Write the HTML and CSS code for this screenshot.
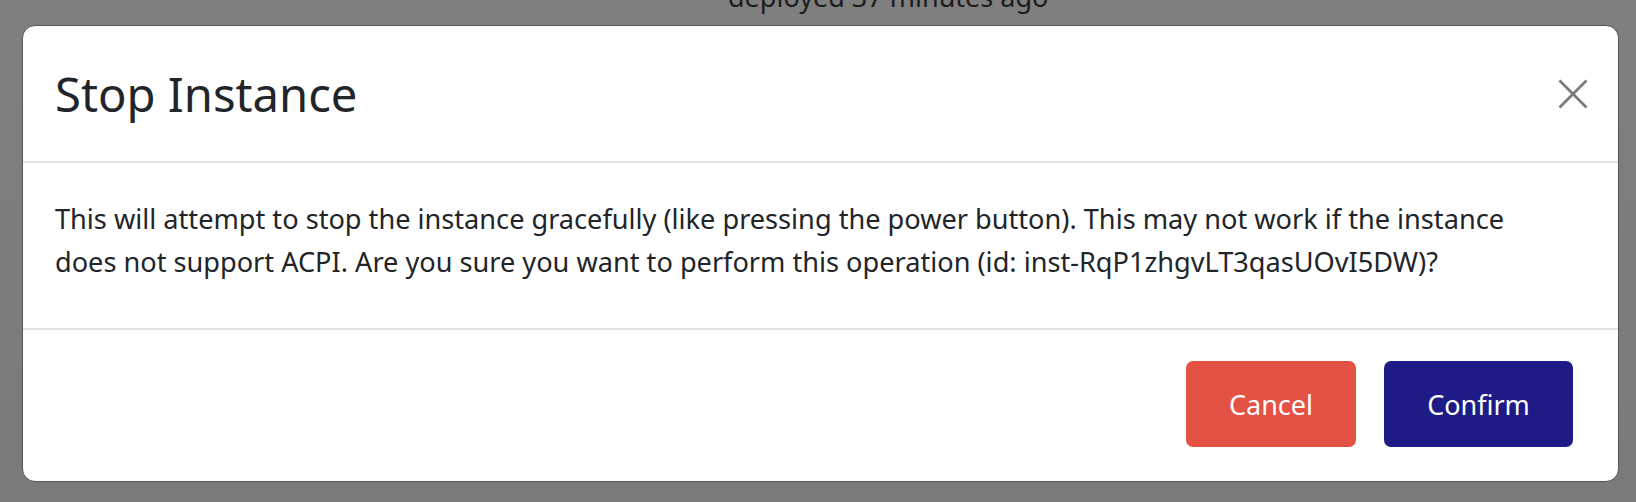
FILE: index.html
```html
<!DOCTYPE html>
<html>
<head>
<meta charset="utf-8">
<link rel="stylesheet" href="styles.css">
</head>
<body>
<div class="backdrop-text">deployed 37 minutes ago</div>
<div class="modal">
  <div class="modal-header">
    <h2 class="modal-title">Stop Instance</h2>
    <button class="close" aria-label="Close">
      <svg width="30" height="30" viewBox="0 0 30 30"><path d="M1.5 1.5 L28.5 28.5 M28.5 1.5 L1.5 28.5" stroke="#7a7a7a" stroke-width="2.8" fill="none"/></svg>
    </button>
  </div>
  <div class="modal-body">
    <p>This will attempt to stop the instance gracefully (like pressing the power button). This may not work if the instance does not support ACPI. Are you sure you want to perform this operation (id: inst-RqP1zhgvLT3qasUOvI5DW)?</p>
  </div>
  <div class="modal-footer">
    <button class="btn btn-cancel">Cancel</button>
    <button class="btn btn-confirm">Confirm</button>
  </div>
</div>
</body>
</html>
```
FILE: styles.css
```css
html, body {
  margin: 0;
  padding: 0;
  height: 100%;
}
body {
  background: linear-gradient(#7f7f7f, #797a7c);
  font-family: "Noto Sans", "Open Sans", sans-serif;
  color: #212529;
  overflow: hidden;
}
.backdrop-text {
  position: absolute;
  top: -25px;
  left: 728px;
  font-size: 27px;
  line-height: 43px;
  color: #1c1c1c;
}
.modal {
  position: relative;
  margin: 25px 0 0 22px;
  width: 1597px;
  height: 457px;
  box-sizing: border-box;
  background: #fff;
  border: 1px solid #555;
  border-radius: 13px;
  display: flex;
  flex-direction: column;
  overflow: hidden;
}
.modal-header {
  height: 137px;
  box-sizing: border-box;
  border-bottom: 2px solid #dfe3e7;
  display: flex;
  align-items: center;
  justify-content: space-between;
  padding: 0 30px 0 32px;
}
.modal-title {
  margin: 0;
  font-size: 47.2px;
  font-weight: 400;
  line-height: 1;
  color: #212529;
  padding-top: 3px;
}
.close {
  background: none;
  border: 0;
  padding: 0;
  width: 30px;
  height: 30px;
  cursor: pointer;
}
.modal-body {
  height: 167px;
  box-sizing: border-box;
  border-bottom: 2px solid #dfe3e7;
  padding: 34px 70px 0 32px;
}
.modal-body p {
  margin: 0;
  font-size: 27.15px;
  line-height: 43px;
}
.modal-footer {
  flex: 1;
  display: flex;
  justify-content: flex-end;
  align-items: flex-start;
  gap: 28px;
  padding: 31px 45px 0 0;
}
.btn {
  height: 86px;
  border: 0;
  border-radius: 7px;
  color: #fff;
  font-family: "Noto Sans", "Open Sans", sans-serif;
  font-size: 27px;
  padding: 0;
}
.btn-cancel {
  background: #e35244;
  width: 170px;
}
.btn-confirm {
  background: #1e1b87;
  width: 189px;
}
```
